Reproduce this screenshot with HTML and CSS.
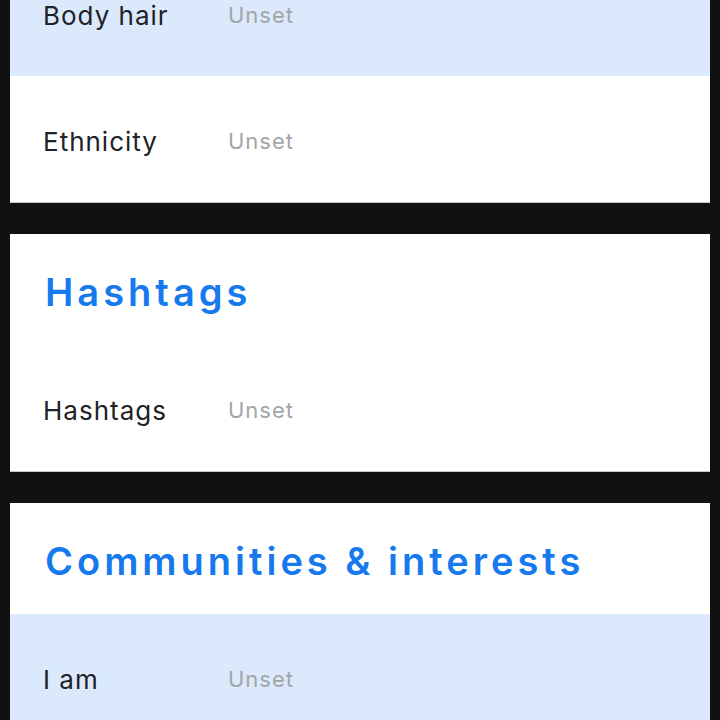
FILE: index.html
```html
<!DOCTYPE html>
<html lang="en">
<head>
<meta charset="utf-8">
<title>Profile details</title>
<link rel="stylesheet" href="styles.css">
</head>
<body>
<main class="sections">
  <section class="card">
    <div class="row row-active"><span class="label">Body hair</span><span class="value">Unset</span></div>
    <div class="row"><span class="label">Ethnicity</span><span class="value">Unset</span></div>
  </section>
  <section class="card">
    <h2 class="card-title">Hashtags</h2>
    <div class="row"><span class="label">Hashtags</span><span class="value">Unset</span></div>
  </section>
  <section class="card">
    <h2 class="card-title">Communities &amp; interests</h2>
    <div class="row row-active"><span class="label">I am</span><span class="value">Unset</span></div>
  </section>
</main>
</body>
</html>
```
FILE: styles.css
```css
html, body {
  margin: 0;
  padding: 0;
  background: #111111;
  height: 720px;
  overflow: hidden;
}

body {
  font-family: Inter, "Noto Sans", sans-serif;
}

/* list is scrolled part-way down the profile form */
.sections {
  display: flex;
  flex-direction: column;
  gap: 31px;
  margin-top: -50px;
  padding: 0 10px;
}

.card {
  background: #ffffff;
  border-bottom: 1px solid #c8c8c8;
}

.card-title {
  margin: 0;
  height: 111px;
  display: flex;
  align-items: center;
  padding: 4px 33px 0 35px;
  box-sizing: border-box;
  color: #1779ee;
  font-size: 38px;
  font-weight: 600;
  letter-spacing: 4px;
}

.row {
  height: 126px;
  display: flex;
  align-items: center;
  padding: 4px 33px 0;
  box-sizing: border-box;
}

.row-active {
  background: #dbe9fc;
}

.label {
  width: 185px;
  color: #1f2226;
  font-size: 26px;
  letter-spacing: 1px;
}

.value {
  color: #a3a5a8;
  font-size: 22px;
  letter-spacing: 1px;
}
```
